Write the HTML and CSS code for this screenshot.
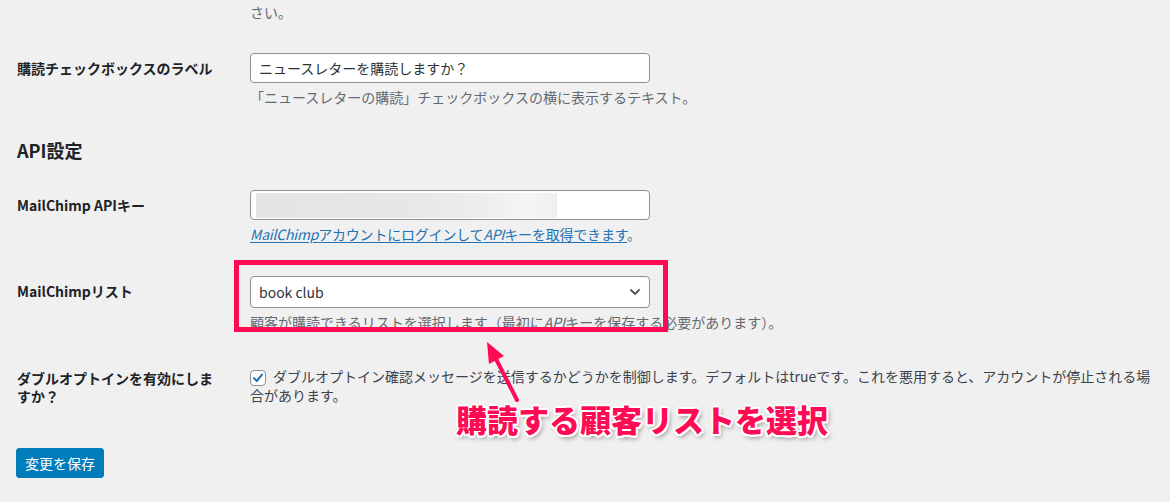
FILE: index.html
```html
<!DOCTYPE html>
<html lang="ja">
<head>
<meta charset="utf-8">
<title>MailChimp 設定</title>
<link rel="stylesheet" href="styles.css">
</head>
<body>
<div class="page">
  <p class="intro desc">さい。</p>

  <div class="form form-first">
    <div class="row">
      <div class="th">購読チェックボックスのラベル</div>
      <div class="td">
        <div class="field">ニュースレターを購読しますか？</div>
        <p class="desc">「ニュースレターの購読」チェックボックスの横に表示するテキスト。</p>
      </div>
    </div>
  </div>

  <h2 class="section">API設定</h2>

  <div class="form form-api">
    <div class="row">
      <div class="th">MailChimp APIキー</div>
      <div class="td">
        <div class="field"><div class="redacted"></div></div>
        <p class="desc desc-link"><a class="link" href="#"><i>MailChimp</i>アカウントにログインして<i>API</i>キーを取得できます</a>。</p>
      </div>
    </div>
    <div class="row">
      <div class="th">MailChimpリスト</div>
      <div class="td">
        <div class="field select">
          <span>book club</span>
          <svg class="chevron" width="10" height="6" viewBox="0 0 10 6"><path d="M1 1 L5 5 L9 1" fill="none" stroke="#50575e" stroke-width="1.8" stroke-linecap="round" stroke-linejoin="round"/></svg>
        </div>
        <p class="desc desc-list">顧客が購読できるリストを選択します（最初に<i>API</i>キーを保存する必要があります）。</p>
      </div>
    </div>
    <div class="row row-check">
      <div class="th th-wrap">ダブルオプトインを有効にしますか？</div>
      <div class="td">
        <p class="check-text"><span class="checkbox"><svg width="14" height="14" viewBox="0 0 14 14"><path d="M3 7.2 L5.8 10 L11 3.6" fill="none" stroke="#2271b1" stroke-width="2" stroke-linecap="round" stroke-linejoin="round"/></svg></span>ダブルオプトイン確認メッセージを送信するかどうかを制御します。デフォルトはtrueです。これを悪用すると、アカウントが停止される場合があります。</p>
      </div>
    </div>
  </div>

  <div class="submit"><button class="btn" type="button">変更を保存</button></div>
</div>

<div class="highlight"></div>
<svg class="arrow" width="60" height="80" viewBox="0 0 60 80">
  <line x1="47" y1="70" x2="25" y2="27" stroke="#ff0a55" stroke-width="4" stroke-linecap="round"/>
  <polygon points="17,12 34,26 19,34" fill="#ff0a55"/>
</svg>
<div class="callout">購読する顧客リストを選択</div>
</body>
</html>
```

FILE: styles.css
```css
html, body {
  margin: 0;
  padding: 0;
}

body {
  position: relative;
  width: 1170px;
  height: 502px;
  overflow: hidden;
  background: #f0f0f1;
  color: #3c434a;
  font-family: "Noto Sans CJK JP", "Noto Sans", sans-serif;
  font-size: 14px;
}

.page {
  padding: 0 14px 0 17px;
}

p {
  margin: 0;
}

.desc {
  color: #646970;
  line-height: 19px;
}

.desc-link {
  letter-spacing: -0.2px;
}

.intro {
  margin: 3px 0 0 233px;
}

.form-first {
  margin-top: 15px;
}

.row {
  display: grid;
  grid-template-columns: 233px 1fr;
  padding: 16px 0;
}

.th {
  max-width: 200px;
  padding-top: 6px;
  line-height: 18px;
  font-weight: 700;
  color: #1d2327;
}

.td {
  min-width: 0;
}

.field {
  display: flex;
  align-items: center;
  box-sizing: border-box;
  width: 400px;
  height: 30px;
  padding: 0 8px;
  background: #fff;
  border: 1px solid #8c8f94;
  border-radius: 4px;
  color: #2c3338;
  line-height: 20px;
}

.field + .desc {
  margin-top: 5px;
}

.redacted {
  width: 301px;
  height: 25px;
  margin-left: -3px;
  background: linear-gradient(90deg, #e2e4e5 0%, #e6e7e8 50%, #eceded 75%, #f4f5f5 90%, #eeefef 100%);
}

.link {
  color: #2271b1;
  text-decoration: underline;
  text-underline-offset: 2px;
}

.select {
  justify-content: space-between;
  height: 32px;
  padding-right: 9px;
}

.chevron {
  display: block;
}

.section {
  margin: 15px 0 0;
  font-size: 18px;
  line-height: 24px;
  font-weight: 700;
  color: #1d2327;
}

.form-api {
  margin-top: 12px;
}

.row-check {
  padding-top: 19px;
}

.th-wrap {
  padding-top: 2px;
}

.check-text {
  line-height: 19px;
  color: #3c434a;
}

.checkbox {
  display: inline-flex;
  align-items: center;
  justify-content: center;
  box-sizing: border-box;
  width: 16px;
  height: 16px;
  margin: 0 7px 0 0;
  vertical-align: -3px;
  background: #fff;
  border: 1px solid #8c8f94;
  border-radius: 4px;
}

.submit {
  margin-top: 27px;
}

.btn {
  box-sizing: border-box;
  height: 30px;
  margin-left: -1px;
  padding: 0 8px;
  background: #007cba;
  border: 1px solid #007cba;
  border-radius: 3px;
  color: #fff;
  font-family: inherit;
  font-size: 14px;
  line-height: 28px;
}

.highlight {
  position: absolute;
  left: 234px;
  top: 260px;
  width: 434px;
  height: 72px;
  box-sizing: border-box;
  border: 5px solid #ff0a55;
}

.arrow {
  position: absolute;
  left: 470px;
  top: 330px;
}

.callout {
  position: absolute;
  left: 456px;
  top: 403px;
  font-size: 31px;
  line-height: 31px;
  font-weight: 900;
  color: #ff0a55;
  white-space: nowrap;
  text-shadow:
    2px 0 0 #fff, -2px 0 0 #fff, 0 2px 0 #fff, 0 -2px 0 #fff,
    1.5px 1.5px 0 #fff, -1.5px 1.5px 0 #fff, 1.5px -1.5px 0 #fff, -1.5px -1.5px 0 #fff,
    2px 3px 5px rgba(0, 0, 0, 0.45);
}
```
